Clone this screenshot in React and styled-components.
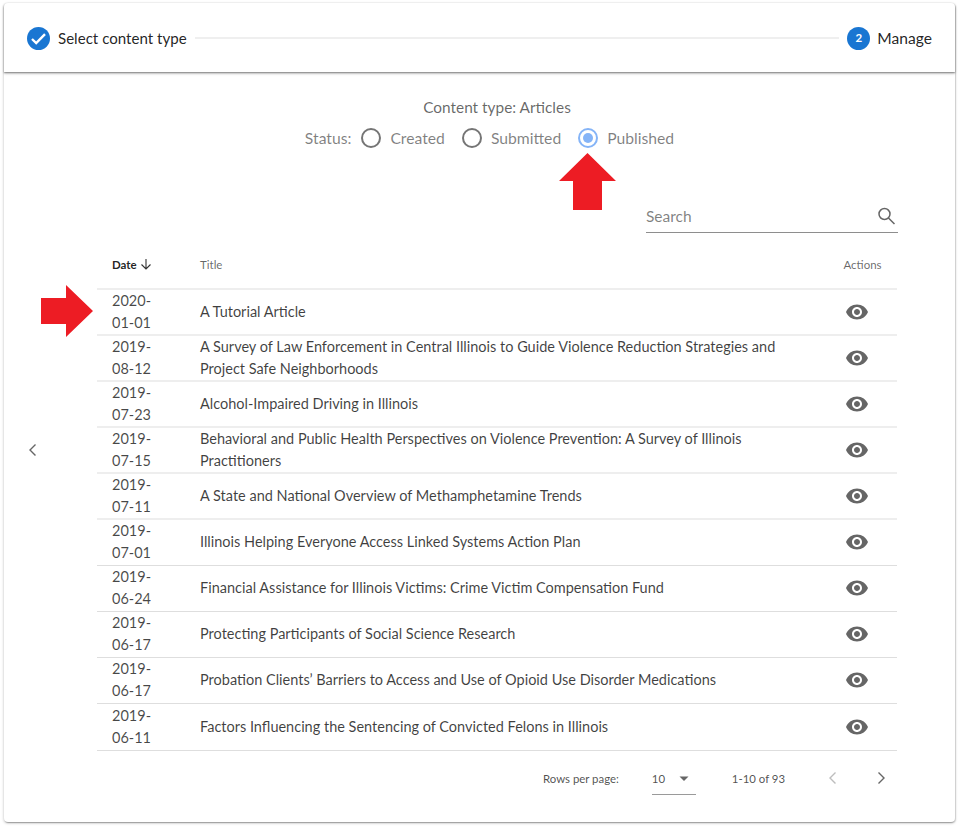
import React from "react";
import styled, { createGlobalStyle } from "styled-components";

const Global = createGlobalStyle`
  html, body { margin: 0; padding: 0; background: #fff; }
  body { font-family: Lato, "Open Sans", sans-serif; color: rgba(0,0,0,.87); }
`;

const Page = styled.div`
  width: 960px;
  height: 826px;
  box-sizing: border-box;
  padding: 3px 5px 4px 4px;
`;
const Card = styled.div`
  position: relative;
  height: 819px;
  display: flex;
  flex-direction: column;
  background: #fff;
  border-radius: 4px;
  box-shadow: 0 1px 3px rgba(0,0,0,.28), 1px 1px 1px rgba(0,0,0,.1), 0 2px 1px -1px rgba(0,0,0,.14);
`;
const Stepper = styled.div`
  height: 69px;
  flex: none;
  box-sizing: border-box;
  display: flex;
  align-items: center;
  padding: 1px 23px 0 23px;
  background: #fff;
  border-radius: 4px 4px 0 0;
  box-shadow: 0 1px 2px rgba(0,0,0,.45), 0 2px 3px rgba(0,0,0,.12);
`;
const Step = styled.div`
  display: flex;
  align-items: center;
  gap: ${p => p.$gap}px;
  font-size: ${p => p.$size}px;
  line-height: 20px;
  color: rgba(0,0,0,.87);
`;
const StepCircle = styled.span`
  width: 23px;
  height: 23px;
  border-radius: 50%;
  background: #1976d2;
  color: #fff;
  font-size: 11.5px;
  font-weight: 700;
  display: flex;
  align-items: center;
  justify-content: center;
`;
const Connector = styled.div`
  flex: 1;
  height: 2px;
  background: #efefef;
  margin: 0 8px;
`;
const Body = styled.div`
  flex: 1;
  display: flex;
`;
const SideButton = styled.div`
  width: 93px;
  flex: none;
  display: flex;
  align-items: center;
  justify-content: center;
  padding: 6px 35px 0 0;
  box-sizing: border-box;
  color: #666;
`;
const Content = styled.div`
  width: 800px;
  flex: none;
  display: flex;
  flex-direction: column;
  align-items: center;
  padding-top: 24px;
`;
const TypeLine = styled.div`
  font-size: 15.4px;
  line-height: 22px;
  color: rgba(0,0,0,.6);
`;
const StatusRow = styled.div`
  display: flex;
  align-items: center;
  font-size: 15.7px;
  height: 24px;
  margin: 8px 15px 0 0;
  color: rgba(0,0,0,.5);
`;
const StatusLabel = styled.span`
  margin-right: 10px;
`;
const Radio = styled.span`
  box-sizing: border-box;
  width: 20px;
  height: 20px;
  border-radius: 50%;
  border: 2px solid ${p => (p.$on ? "#85b4f7" : "#757575")};
  display: flex;
  align-items: center;
  justify-content: center;
  margin-right: 9px;
  &::after {
    content: "";
    display: ${p => (p.$on ? "block" : "none")};
    width: 10px;
    height: 10px;
    border-radius: 50%;
    background: #85b4f7;
  }
`;
const RadioLabel = styled.span`
  margin-right: ${p => p.$gap}px;
`;
const SearchWrap = styled.div`
  align-self: flex-end;
  width: 252px;
  height: 36px;
  margin: 47px -1px 0 0;
  padding-top: 2px;
  box-sizing: border-box;
  border-bottom: 1px solid #8e8e8e;
  display: flex;
  align-items: center;
  justify-content: space-between;
  font-size: 15.5px;
  color: rgba(0,0,0,.5);
`;
const Table = styled.div`
  align-self: stretch;
  margin-top: 19px;
`;
const Row = styled.div`
  display: grid;
  grid-template-columns: 103px 594px 103px;
  align-items: center;
  height: ${p => p.$h}px;
  box-sizing: border-box;
  padding-bottom: ${p => p.$pad || 0}px;
  border-bottom: ${p => (p.$thick ? "2px solid #eeeeee" : "1px solid #dedede")};
`;
const HeadRow = styled(Row)`
  padding-bottom: 12px;
`;
const HeadDate = styled.div`
  padding-left: 15px;
  font-size: 11.5px;
  font-weight: 700;
  color: rgba(0,0,0,.87);
  display: flex;
  align-items: center;
  gap: 1px;
`;
const HeadCell = styled.div`
  font-size: 11.5px;
  color: rgba(0,0,0,.6);
  text-align: ${p => (p.$center ? "center" : "left")};
  padding-left: ${p => (p.$center ? "34px" : "0")};
`;
const DateCell = styled.div`
  padding-left: 15px;
  width: 60px;
  font-size: 14.5px;
  line-height: 22px;
  color: rgba(0,0,0,.72);
`;
const TitleCell = styled.div`
  font-size: 14.5px;
  line-height: 22px;
  color: rgba(0,0,0,.75);
  padding-right: 10px;
`;
const ActionCell = styled.div`
  display: flex;
  justify-content: center;
  padding-left: 23px;
  color: #666;
`;
const Pager = styled.div`
  display: flex;
  align-items: center;
  height: 54px;
  font-size: 11.4px;
  color: rgba(0,0,0,.7);
  padding-left: 446px;
  white-space: nowrap;
`;
const PerPage = styled.div`
  width: 44px;
  box-sizing: border-box;
  height: 32px;
  margin-left: 33px;
  border-bottom: 1px solid #9a9a9a;
  display: flex;
  align-items: center;
  justify-content: space-between;
  position: relative;
  top: 1px;
`;
const Range = styled.span`
  margin-left: 36px;
  width: 76px;
`;
const PageBtn = styled.span`
  display: flex;
  margin-left: ${p => p.$ml}px;
  color: ${p => (p.$off ? "#bdbdbd" : "#666")};
`;
const Arrow = styled.svg`
  position: absolute;
  left: ${p => p.$x}px;
  top: ${p => p.$y}px;
`;

const Eye = () => (
  <svg width="24" height="24" viewBox="0 0 24 24" fill="currentColor">
    <path d="M12 4.500C7 4.500 2.730 7.610 1 12c1.730 4.390 6 7.500 11 7.500s9.270-3.110 11-7.500c-1.730-4.390-6-7.500-11-7.500zM12 17c-2.760 0-5-2.240-5-5s2.240-5 5-5 5 2.240 5 5-2.240 5-5 5zm0-8c-1.660 0-3 1.340-3 3s1.340 3 3 3 3-1.340 3-3-1.340-3-3-3z" />
  </svg>
);
const ChevL = () => (
  <svg width="24" height="24" viewBox="0 0 24 24" fill="none" stroke="currentColor" strokeWidth="1.4">
    <path d="M14.500 6.500 9 12l5.500 5.500" />
  </svg>
);
const ChevR = () => (
  <svg width="24" height="24" viewBox="0 0 24 24" fill="none" stroke="currentColor" strokeWidth="1.4">
    <path d="M9.500 6.500 15 12l-5.500 5.500" />
  </svg>
);

const rows = [
  ["2020-01-01", "A Tutorial Article"],
  ["2019-08-12", "A Survey of Law Enforcement in Central Illinois to Guide Violence Reduction Strategies and Project Safe Neighborhoods"],
  ["2019-07-23", "Alcohol-Impaired Driving in Illinois"],
  ["2019-07-15", "Behavioral and Public Health Perspectives on Violence Prevention: A Survey of Illinois Practitioners"],
  ["2019-07-11", "A State and National Overview of Methamphetamine Trends"],
  ["2019-07-01", "Illinois Helping Everyone Access Linked Systems Action Plan"],
  ["2019-06-24", "Financial Assistance for Illinois Victims: Crime Victim Compensation Fund"],
  ["2019-06-17", "Protecting Participants of Social Science Research"],
  ["2019-06-17", "Probation Clients’ Barriers to Access and Use of Opioid Use Disorder Medications"],
  ["2019-06-11", "Factors Influencing the Sentencing of Convicted Felons in Illinois"],
];

export default function App() {
  return (
    <Page>
      <Global />
      <Card>
        <Stepper>
          <Step $size={15.1} $gap={8}>
            <StepCircle>
              <svg width="17" height="17" viewBox="0 0 17 17" fill="none" stroke="#fff" strokeWidth="2.400">
                <path d="M2 9l4.200 4L15 4.200" />
              </svg>
            </StepCircle>
            Select content type
          </Step>
          <Connector />
          <Step $size={15.6} $gap={7}>
            <StepCircle>2</StepCircle>
            Manage
          </Step>
        </Stepper>
        <Body>
          <SideButton><ChevL /></SideButton>
          <Content>
            <TypeLine>Content type: Articles</TypeLine>
            <StatusRow>
              <StatusLabel>Status:</StatusLabel>
              <Radio />
              <RadioLabel $gap={17}>Created</RadioLabel>
              <Radio />
              <RadioLabel $gap={17}>Submitted</RadioLabel>
              <Radio $on />
              <RadioLabel $gap={0}>Published</RadioLabel>
            </StatusRow>
            <SearchWrap>
              Search
              <svg width="24" height="24" viewBox="0 0 24 24" fill="none" stroke="#666" strokeWidth="1.500">
                <circle cx="10.500" cy="10" r="5.500" />
                <path d="M14.500 14l6 6" />
              </svg>
            </SearchWrap>
            <Table>
              <HeadRow $h={38} $thick>
                <HeadDate>
                  Date
                  <svg width="16" height="16" viewBox="0 0 16 16" fill="none" stroke="#333" strokeWidth="1.100">
                    <path d="M8 3v10M3.500 8.500 8 13l4.500-4.500" />
                  </svg>
                </HeadDate>
                <HeadCell>Title</HeadCell>
                <HeadCell $center>Actions</HeadCell>
              </HeadRow>
              {rows.map(([d, t], i) => (
                <Row key={i} $h={i === 9 ? 47 : 46} $thick={i < 5} $pad={i >= 5 && i < 9 ? 1 : 0}>
                  <DateCell>{d}</DateCell>
                  <TitleCell>{t}</TitleCell>
                  <ActionCell><Eye /></ActionCell>
                </Row>
              ))}
              <Pager>
                Rows per page:
                <PerPage>
                  10
                  <svg width="24" height="24" viewBox="0 0 24 24" fill="#666">
                    <path d="M7.500 10.500l4.500 4.500 4.500-4.500z" transform="translate(0 -1)" />
                  </svg>
                </PerPage>
                <Range>1-10 of 93</Range>
                <PageBtn $off $ml={13}><ChevL /></PageBtn>
                <PageBtn $ml={24}><ChevR /></PageBtn>
              </Pager>
            </Table>
          </Content>
        </Body>
        <Arrow $x={555} $y={150} width="57" height="57" viewBox="0 0 57 57">
          <path d="M28.500 0 57 28H43v29H14V28H0z" fill="#ed1c24" />
        </Arrow>
        <Arrow $x={37} $y={282} width="52" height="52" viewBox="0 0 52 52">
          <path d="M52 26 25 0v13H0v26h25v13z" fill="#ed1c24" />
        </Arrow>
      </Card>
    </Page>
  );
}
